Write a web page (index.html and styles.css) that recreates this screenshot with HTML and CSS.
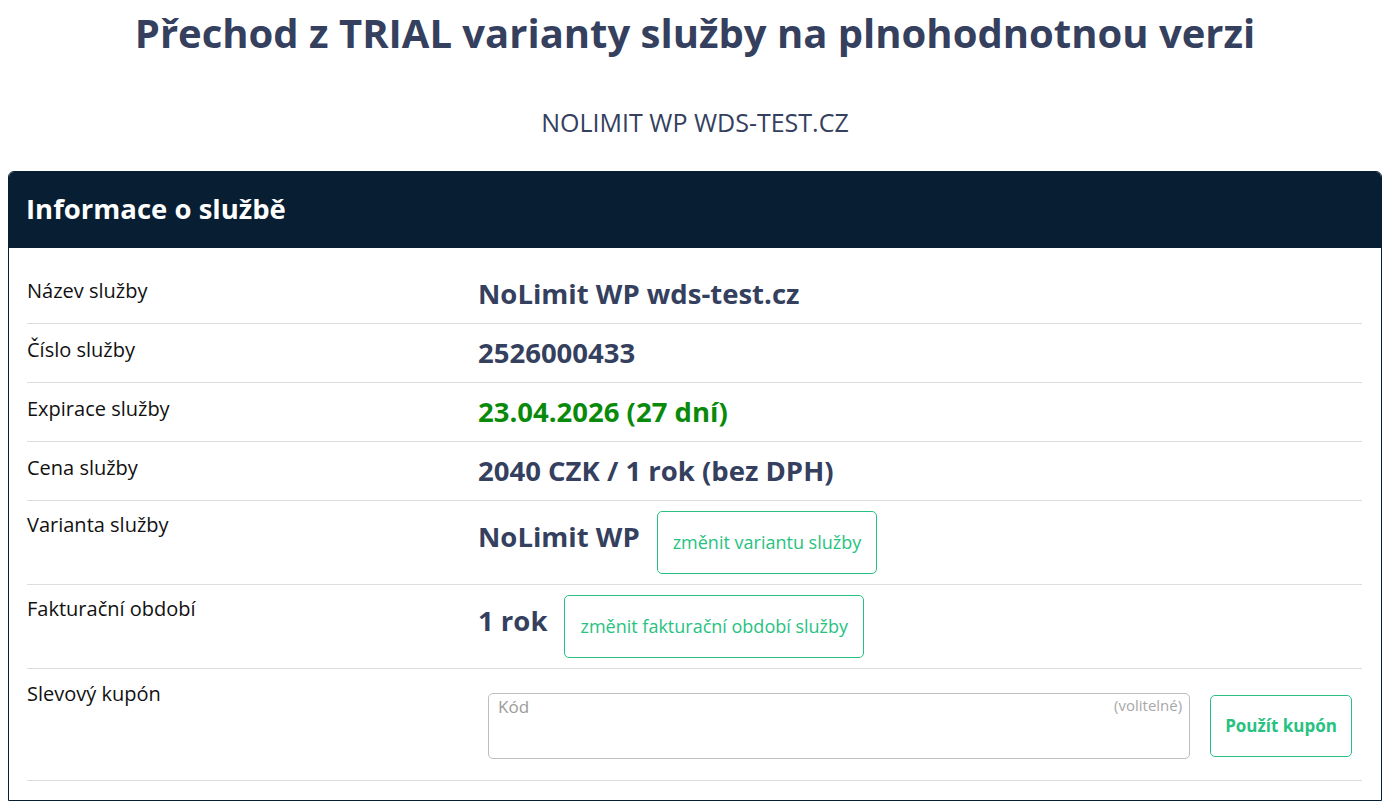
FILE: index.html
```html
<!DOCTYPE html>
<html lang="cs">
<head>
<meta charset="utf-8">
<title>Přechod z TRIAL varianty</title>
<link rel="stylesheet" href="styles.css">
</head>
<body>
<div class="page">
  <h1 class="title">Přechod z TRIAL varianty služby na plnohodnotnou verzi</h1>
  <p class="subtitle">NOLIMIT WP WDS-TEST.CZ</p>
  <section class="card">
    <header class="card-head">Informace o službě</header>
    <div class="card-body">
      <div class="row">
        <div class="label">Název služby</div>
        <div class="value">NoLimit WP wds-test.cz</div>
      </div>
      <div class="row">
        <div class="label">Číslo služby</div>
        <div class="value">2526000433</div>
      </div>
      <div class="row">
        <div class="label">Expirace služby</div>
        <div class="value ok">23.04.2026 (27 dní)</div>
      </div>
      <div class="row">
        <div class="label">Cena služby</div>
        <div class="value">2040 CZK / 1 rok (bez DPH)</div>
      </div>
      <div class="row row-btn">
        <div class="label">Varianta služby</div>
        <div class="value with-btn"><span class="val-text">NoLimit WP</span><button class="btn">změnit variantu služby</button></div>
      </div>
      <div class="row row-btn">
        <div class="label">Fakturační období</div>
        <div class="value with-btn"><span class="val-text">1 rok</span><button class="btn">změnit fakturační období služby</button></div>
      </div>
      <div class="row row-coupon">
        <div class="label">Slevový kupón</div>
        <div class="coupon">
          <div class="field">
            <span class="ph">Kód</span>
            <span class="opt">(volitelné)</span>
          </div>
          <button class="btn btn-bold">Použít kupón</button>
        </div>
      </div>
    </div>
  </section>
</div>
</body>
</html>
```

FILE: styles.css
```css
* { box-sizing: border-box; }
html, body { margin: 0; padding: 0; background: #fff; }
body {
  font-family: "Open Sans", "Noto Sans", sans-serif;
  color: #111;
}
.page { padding: 0 7px 0 8px; }
.title {
  margin: 0;
  padding-top: 7px;
  text-align: center;
  font-size: 40px;
  line-height: 52px;
  font-weight: 700;
  color: #34405e;
}
.subtitle {
  margin: 47px 0 0;
  text-align: center;
  font-size: 25px;
  line-height: 32px;
  color: #34405e;
}
.card {
  margin-top: 33px;
  border: 1px solid #071e33;
  border-radius: 6px 6px 0 0;
  overflow: hidden;
}
.card-head {
  background: #071e33;
  color: #fff;
  font-size: 27.5px;
  font-weight: 700;
  height: 76px;
  line-height: 74px;
  padding-left: 17px;
}
.card-body {
  padding: 17px 19px 19px 18px;
}
.row {
  display: grid;
  grid-template-columns: 451px 1fr;
  padding: 12px 0 12px;
  border-bottom: 1px solid #dddddd;
  min-height: 58px;
}
.label {
  font-size: 20px;
  line-height: 27px;
  color: #111;
}
.value {
  font-size: 27.5px;
  font-weight: 700;
  line-height: 34px;
  color: #34405e;
}
.value.ok { color: #0a8a0a; }
.with-btn {
  display: flex;
  align-items: center;
  gap: 17px;
}
.val-text { margin-bottom: 12px; }
.row-btn { padding: 10px 0 10px; }
.btn {
  font-family: "Open Sans", "Noto Sans", sans-serif;
  font-size: 18px;
  line-height: 24px;
  color: #27c281;
  background: #fff;
  border: 1px solid #27c281;
  border-radius: 5px;
  padding: 18px 15px 19px;
  cursor: pointer;
}
.btn-bold { font-size: 17px; font-weight: 700; padding: 18px 14px; }
.row-coupon { padding: 11px 0 21px; }
.coupon {
  display: flex;
  align-items: center;
  gap: 20px;
  padding: 13px 10px 0 10px;
}
.field {
  flex: 1;
  height: 66px;
  border: 1px solid #bdbdc2;
  border-radius: 5px;
  display: flex;
  justify-content: space-between;
  align-items: flex-start;
  padding: 2px 7px 0 9px;
}
.ph {
  font-size: 17px;
  line-height: 22px;
  color: #9b9b9b;
}
.opt {
  font-size: 15px;
  line-height: 18px;
  color: #a8a8a8;
}
```
